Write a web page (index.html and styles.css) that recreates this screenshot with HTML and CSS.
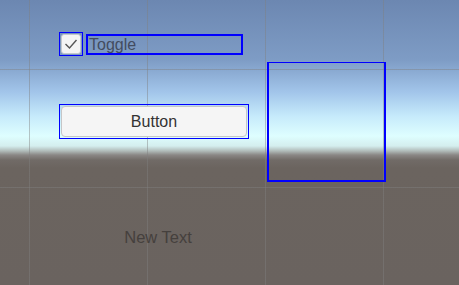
FILE: index.html
```html
<!DOCTYPE html>
<html lang="en">
<head>
<meta charset="UTF-8">
<title>Scene</title>
<link rel="stylesheet" href="styles.css">
</head>
<body>

<div class="scene">
    <div class="toggle">
        <div class="toggle-check">
            <div class="check-box">
                <svg width="16" height="16" viewBox="0 0 16 16">
                    <path d="M2.5 8 L6.5 12 L13.5 4" fill="none" stroke="#555" stroke-width="1.4"/>
                </svg>
            </div>
        </div>
        <div class="toggle-label">Toggle</div>
    </div>

    <div class="button-rect">
        <button class="btn">Button</button>
    </div>

    <div class="image-rect"></div>

    <div class="text-label">New Text</div>
</div>

</body>
</html>
```

FILE: styles.css
```css
* {
    margin: 0;
    padding: 0;
    box-sizing: border-box;
    font-family: 'Liberation Sans', Arial, sans-serif;
}
body {
    width: 459px;
    height: 285px;
    overflow: hidden;
}
.scene {
    position: relative;
    width: 459px;
    height: 285px;
    overflow: hidden;
    background:
        linear-gradient(to right, rgba(128, 128, 128, 0.45) 1px, transparent 1px) 29px 0 / 118px 100%,
        linear-gradient(to bottom, rgba(128, 128, 128, 0.45) 1px, transparent 1px) 0 69px / 100% 118px,
        linear-gradient(to bottom,
            #6c87b1 0px,
            #7e9cc5 60px,
            #a2c5ea 92px,
            #c6eafb 116px,
            #defeff 136px,
            #d4eeee 146px,
            #b0bab8 151px,
            #8a8785 155px,
            #716b67 160px,
            #6b645f 168px,
            #6a635f 285px);
}
/* scene gizmos sit on a free canvas */
.toggle {
    position: absolute;
    left: 59px;
    top: 32px;
    display: flex;
    align-items: center;
    gap: 3px;
}
.toggle-check {
    width: 24px;
    height: 24px;
    border: 1.5px solid #0000ff;
    display: flex;
    align-items: center;
    justify-content: center;
}
.check-box {
    width: 20px;
    height: 20px;
    background: #f4f4f4;
    border: 1px solid #c4c8cc;
    border-radius: 3px;
    display: flex;
    align-items: center;
    justify-content: center;
}
.toggle-label {
    width: 157px;
    height: 21px;
    border: 2px solid #0000ff;
    font-size: 16px;
    line-height: 17px;
    color: #434c5f;
    padding-left: 1px;
}
.button-rect {
    position: absolute;
    left: 59px;
    top: 104px;
    width: 190px;
    height: 35px;
    border: 1.5px solid #0000ff;
    padding: 1px;
}
.btn {
    width: 100%;
    height: 100%;
    background: #f5f5f5;
    border: 1px solid #c6c6c6;
    border-radius: 4px;
    font-size: 16px;
    padding-top: 1px;
    color: #333;
}
.image-rect {
    position: absolute;
    left: 267px;
    top: 62px;
    width: 119px;
    height: 120px;
    border: 2px solid #0000ff;
    border-top-width: 1.5px;
}
.text-label {
    position: absolute;
    left: 108px;
    top: 228px;
    width: 100px;
    text-align: center;
    font-size: 16.5px;
    color: #45403d;
}
```
